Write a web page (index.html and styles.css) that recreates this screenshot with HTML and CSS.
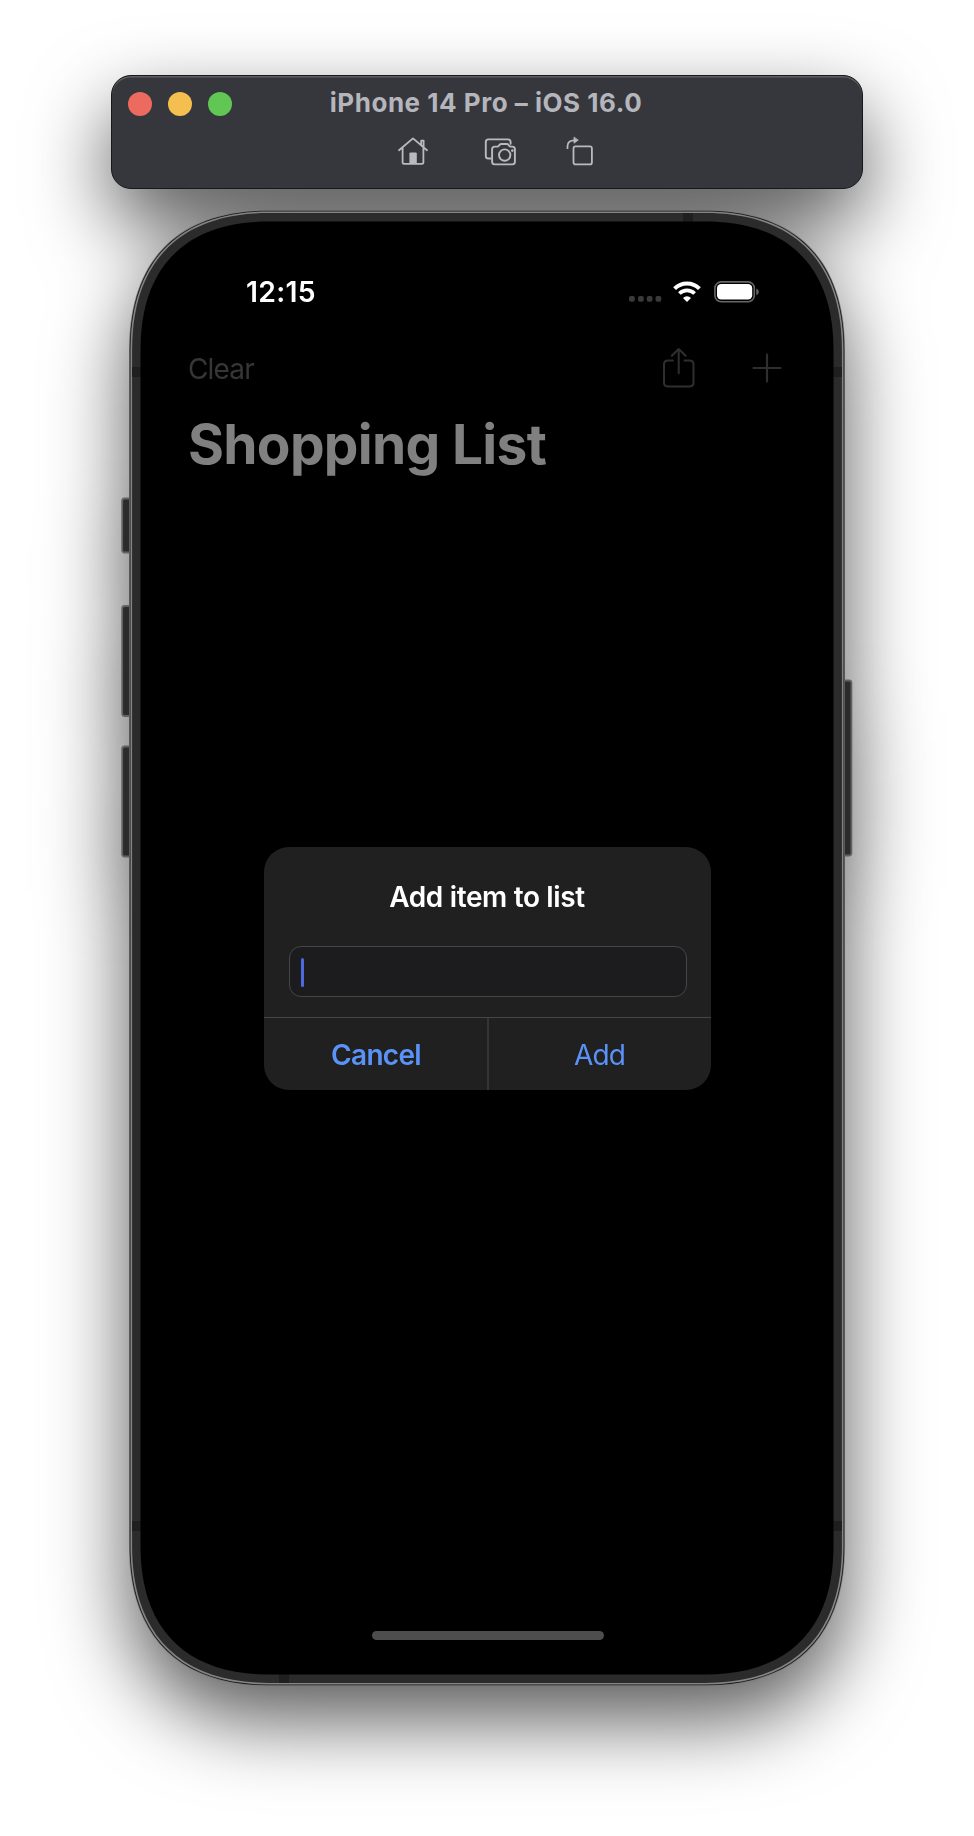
FILE: index.html
```html
<!DOCTYPE html>
<html lang="en">
<head>
<meta charset="utf-8">
<title>iPhone 14 Pro – iOS 16.0</title>
<link rel="stylesheet" href="styles.css">
</head>
<body>
<div class="simulator">
  <header class="toolbar">
    <div class="titlebar">
      <div class="lights"><i class="light close"></i><i class="light minimize"></i><i class="light zoom"></i></div>
      <h1 class="title"><span>iPhone 14 Pro – iOS 16.0</span></h1>
    </div>
    <div class="tools">
      <svg class="tool" width="32" height="32" viewBox="0 0 32 32" fill="none" stroke="#b9bac0" stroke-width="1.8" stroke-linecap="round" stroke-linejoin="round"><path d="M2 15.2 16 3.4 30 15.2M24.2 10V5.6h2.4v6.8M5.6 13v14.2q0 1.6 1.6 1.6h17.6q1.6 0 1.6-1.6V13"/><path d="M12.4 28.5v-9.9q0-1.2 1.2-1.2h5q1.2 0 1.2 1.2v9.9z" fill="#b9bac0" stroke="none"/></svg>
      <svg class="tool camera" width="36" height="32" viewBox="0 0 36 32" fill="none" stroke="#b9bac0" stroke-width="1.9" stroke-linecap="round" stroke-linejoin="round"><path d="M7.6 23.5H5.4Q2.8 23.5 2.8 20.9V7Q2.8 4.4 5.4 4.4H25q2.6 0 2.6 2.6v1.8"/><path d="M11.7 11.6h2.5q1.1 0 1.7-.9l.7-.9q.6-.8 1.6-.8h5.6q1 0 1.6.8l.7.9q.6.9 1.7.9h1.5q2.6 0 2.6 2.6v12.6q0 2.6-2.6 2.6H11.7q-2.6 0-2.6-2.6V14.2q0-2.6 2.6-2.6z"/><circle cx="21.7" cy="20.1" r="5.7"/><circle cx="29.3" cy="15.6" r="1.3" fill="#b9bac0" stroke="none"/></svg>
      <svg class="tool rotate" width="32" height="32" viewBox="0 0 32 32" fill="none" stroke="#b9bac0" stroke-width="1.8" stroke-linecap="round" stroke-linejoin="round"><path d="M2.5 13.2v-2Q2.5 5.3 9.5 5.3"/><path d="M9 2.4v5.8l4-2.9z" fill="#b9bac0" stroke-width=".8"/><rect x="8.5" y="11.4" width="18.4" height="18" rx="2"/></svg>
    </div>
  </header>

  <main class="phone">
    <svg class="body" width="732" height="1476" viewBox="-8 0 732 1476">
      <g fill="#2b2b2b" stroke="#626262" stroke-width="1.8">
        <rect x="-6.8" y="288.5" width="12" height="54" rx="2.5"/>
        <rect x="-6.8" y="396" width="12" height="110" rx="2.5"/>
        <rect x="-6.8" y="536.5" width="12" height="110" rx="2.5"/>
        <rect x="710" y="470.5" width="12.4" height="175" rx="2.5"/>
      </g>
      <g id="shell"></g>
    </svg>
    <div class="screen">
      <div class="status">
        <span class="clock">12:15</span>
        <div class="indicators">
          <svg width="33" height="10" viewBox="0 0 33 10" fill="#3a3a3a" class="dots"><rect x="0" y="1" width="5.8" height="5.8" rx="2"/><rect x="9" y="1" width="5.8" height="5.8" rx="2"/><rect x="17.7" y="1" width="5.8" height="5.8" rx="2"/><rect x="26.5" y="1" width="5.8" height="5.8" rx="2"/></svg>
          <svg class="wifi" width="28" height="22" viewBox="0 0 28 22" fill="none" stroke="#fff"><path d="M1.6 7.6a17.6 17.6 0 0 1 24.8 0" stroke-width="4"/><path d="M6.4 12.5a10.8 10.8 0 0 1 15.2 0" stroke-width="3.8"/><path d="M14 21l-4-4.1a5.6 5.6 0 0 1 8 0z" fill="#fff" stroke="none"/></svg>
          <svg class="battery" width="46" height="22" viewBox="0 0 46 22"><rect x=".9" y=".9" width="39.4" height="19.8" rx="6.2" fill="none" stroke="#666" stroke-width="1.6"/><rect x="3" y="3" width="35.2" height="15.6" rx="4.2" fill="#fff"/><path d="M42.3 7.4q2.5 1 2.5 3.4t-2.5 3.4z" fill="#666"/></svg>
        </div>
      </div>
      <nav class="nav">
        <span class="clear">Clear</span>
        <svg class="share" width="34" height="44" viewBox="0 0 34 44" fill="none" stroke="#2f2f2f" stroke-width="2" stroke-linecap="round" stroke-linejoin="round"><path d="M11 13.5H6Q2 13.5 2 17.5V35.5Q2 39.5 6 39.5H27.5Q31.5 39.5 31.5 35.5V17.5Q31.5 13.5 27.5 13.5H22.5M16.7 26.3V2.6M9.8 8.8 16.7 2l6.9 6.8"/></svg>
        <svg class="plus" width="30" height="30" viewBox="0 0 30 30" fill="none" stroke="#2f2f2f" stroke-width="2.2" stroke-linecap="round"><path d="M15 1.5v27M1.5 15h27"/></svg>
      </nav>
      <h2 class="heading"><span>Shopping List</span></h2>
      <section class="alert">
        <div class="alert-body">
          <p class="alert-title"><span>Add item to list</span></p>
          <div class="field"><i class="caret"></i></div>
        </div>
        <div class="actions">
          <div class="action cancel"><span>Cancel</span></div>
          <div class="action add"><span>Add</span></div>
        </div>
      </section>
      <div class="home-bar"></div>
    </div>
  </main>
</div>
<script src="shell.js"></script>
</body>
</html>
```
FILE: styles.css
```css
* { box-sizing: border-box; }
html, body { margin: 0; background: #fff; }
body {
  width: 974px; height: 1836px; overflow: hidden;
  display: flex; flex-direction: column; align-items: center;
  padding-top: 75px;
  font-family: Inter, "Liberation Sans", sans-serif;
}
h1, h2, p { margin: 0; font-weight: inherit; font-size: inherit; }
svg { display: block; flex: none; overflow: visible; }
span { white-space: nowrap; }
.simulator {
  width: 752px; display: flex; flex-direction: column; align-items: center; gap: 21px;
  filter: drop-shadow(0 34px 40px rgba(0, 0, 0, .65));
}
.toolbar {
  width: 752px; height: 114px; border-radius: 20px; background: #36373c;
  border: 1px solid #18181a;
  box-shadow: inset 0 1.5px 0 #5f5f62;
}
.titlebar { display: grid; grid-template-columns: 16px 104px 1fr 120px; height: 56px; align-items: center; }
.lights { grid-column: 2; display: flex; gap: 16px; }
.light { width: 24px; height: 24px; border-radius: 50%; }
.close { background: #ed6a5f; }
.minimize { background: #f5bf4f; }
.zoom { background: #62c655; }
.title { grid-column: 3; text-align: center; font-size: 26px; line-height: 32px; letter-spacing: .52px; font-weight: 700; color: #b5b6bc; padding: 0 2px 2px 0; }
.tools { display: flex; justify-content: flex-start; padding: 3px 0 0 285px; }
.camera { margin-left: 54px; }
.rotate { margin-left: 46px; }
.phone { position: relative; width: 716px; height: 1476px; padding: 11px 11px 12px; }
.body { position: absolute; left: -8px; top: 0; }
.screen { position: relative; height: 1453px; display: flex; flex-direction: column; align-items: center; }
.status { align-self: stretch; display: flex; justify-content: space-between; padding: 52px 74px 0 106px; height: 110px; }
.clock { font-size: 28.3px; line-height: 38px; letter-spacing: .3px; font-weight: 600; color: #fff; }
.indicators { display: flex; padding-top: 8px; }
.dots { margin: 14px 11px 0 0; }
.battery { margin-left: 13px; }
.nav { align-self: stretch; display: flex; align-items: center; padding: 0 52px 0 48px; height: 74px; }
.clear { font-size: 28px; line-height: 36px; letter-spacing: -.85px; color: #363636; margin-right: auto; padding-top: 1px; }
.share { margin: 1px 0 0; }
.plus { margin-left: 56px; }
.heading { align-self: flex-start; padding-left: 48px; margin-top: 5px; font-size: 55px; line-height: 68px; letter-spacing: -.7px; font-weight: 700; color: #808080; }
.alert { width: 447px; height: 243px; margin-top: 369px; border-radius: 25px; background: #202020; }
.alert-body { height: 171px; padding: 32px 25px 0; border-bottom: 1px solid #454545; }
.alert-title { height: 67px; text-align: center; font-size: 28px; line-height: 37px; letter-spacing: -.35px; font-weight: 600; color: #fff; }
.field { width: 398px; height: 51px; border: 1px solid #464646; border-radius: 12px; background: #1c1c1e; padding: 11px; }
.caret { display: block; width: 3.5px; height: 29px; border-radius: 1.5px; background: #4d69e2; }
.actions { display: grid; grid-template-columns: 225px 1fr; height: 72px; }
.action { display: flex; align-items: center; justify-content: center; font-size: 28px; color: #5a92f7; letter-spacing: -.9px; padding-top: 2px; }
.cancel { border-right: 2px solid #343434; font-weight: 600; letter-spacing: -.7px; padding-left: 2px; }
.home-bar { width: 232px; height: 9px; border-radius: 5px; background: #4d4d4d; margin: auto 0 34px 1px; }
```
FILE: shell.js
```js
// Draws the rounded device shell: nested outlines with continuous corners.
const NS = 'http://www.w3.org/2000/svg';
const shell = document.getElementById('shell');

function outline(inset) {
  const a = inset, r = 716 - inset, b = 1476 - inset;
  const len = 140 - inset;        // length of edge taken by a corner
  const h = len * (1 - 0.648);    // distance of curve handle from the corner
  return `M${a + len} ${a}H${r - len}C${r - h} ${a} ${r} ${a + h} ${r} ${a + len}` +
    `V${b - len}C${r} ${b - h} ${r - h} ${b} ${r - len} ${b}` +
    `H${a + len}C${a + h} ${b} ${a} ${b - h} ${a} ${b - len}` +
    `V${a + len}C${a} ${a + h} ${a + h} ${a} ${a + len} ${a}Z`;
}

function add(tag, attrs) {
  const el = document.createElementNS(NS, tag);
  for (const k in attrs) el.setAttribute(k, attrs[k]);
  shell.appendChild(el);
}

add('path', { d: outline(0), fill: '#777' });
add('path', { d: outline(0.7), fill: '#161616' });
add('path', { d: outline(1.5), fill: '#848484' });
add('path', { d: outline(3.1), fill: '#2b2b2b' });
// antenna bands
add('rect', { x: 3, y: 157, width: 9, height: 10, fill: '#1f1f1f' });
add('rect', { x: 704, y: 157, width: 9, height: 10, fill: '#1f1f1f' });
add('rect', { x: 3, y: 1311, width: 9, height: 10, fill: '#1f1f1f' });
add('rect', { x: 704, y: 1311, width: 9, height: 10, fill: '#1f1f1f' });
add('rect', { x: 554, y: 3, width: 10, height: 9, fill: '#1f1f1f' });
add('rect', { x: 150, y: 1464, width: 10, height: 9, fill: '#1f1f1f' });
add('path', { d: outline(11.5), fill: '#000' });
```
